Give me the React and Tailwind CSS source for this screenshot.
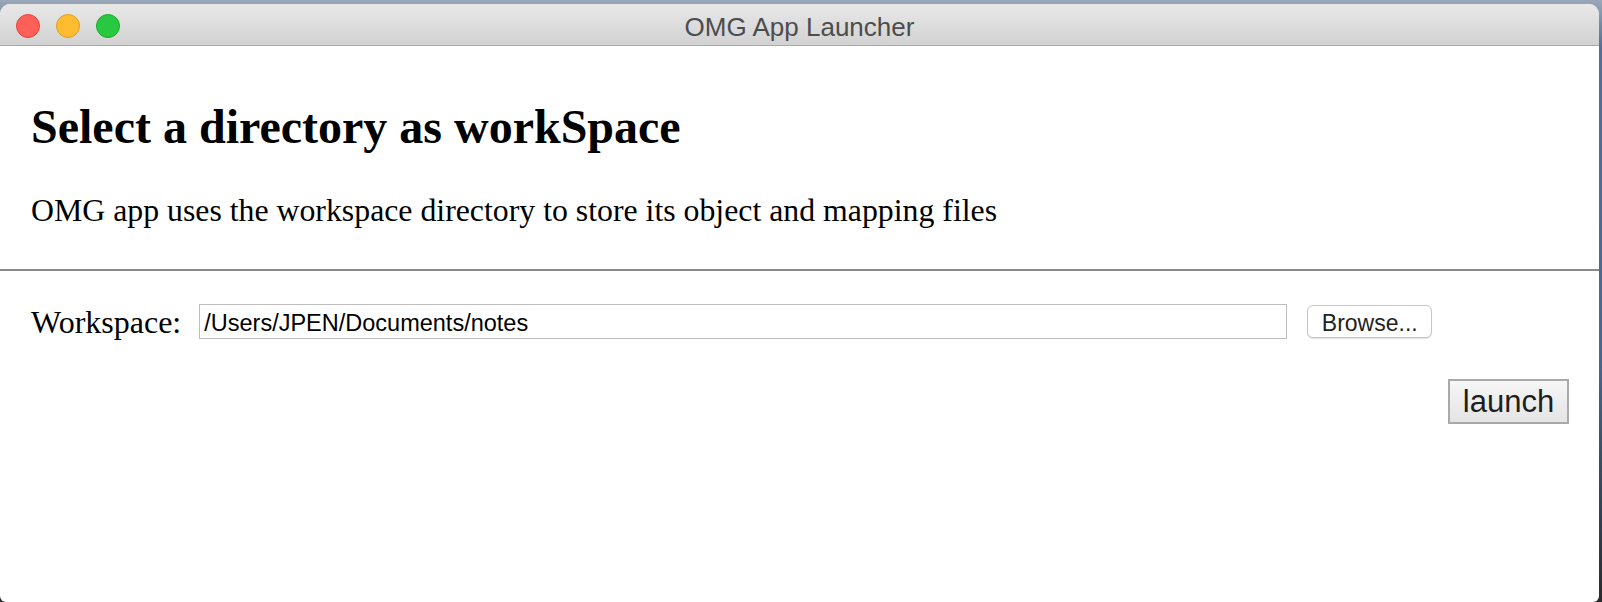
export default function App() {
  return (
    <div className="w-[1602px] h-[602px] overflow-hidden pt-[4px] pr-[3px] bg-[linear-gradient(to_bottom,#9aa7b8_0%,#4f7099_8%,#456891_60%,#2b2a2c_100%)]">
      <div className="flex flex-col h-full bg-white rounded-t-[10px] rounded-b-[6px] overflow-hidden">
        {/* Title bar */}
        <div className="h-[42px] shrink-0 grid grid-cols-[1fr_auto_1fr] items-center border-b border-[#a9a9a9] bg-[linear-gradient(to_bottom,#e8e8e8,#d2d2d2)]">
          <div className="flex items-center gap-[16px] pl-[16px] pt-[2px]">
            <span className="block w-[24px] h-[24px] rounded-full bg-[#fe5f57] border border-[#e1463f]" />
            <span className="block w-[24px] h-[24px] rounded-full bg-[#febc2e] border border-[#df9e22]" />
            <span className="block w-[24px] h-[24px] rounded-full bg-[#28c840] border border-[#1aab29]" />
          </div>
          <div className="pt-[4px] text-[26px] leading-[30px] text-[#4d4d4d] font-['Liberation_Sans',Arial,sans-serif]">
            OMG App Launcher
          </div>
          <div />
        </div>

        {/* Header */}
        <div className="px-[31px] font-['Liberation_Serif','Times_New_Roman',serif] text-black">
          <h2 className="mt-[53px] text-[48px] leading-[56px] font-bold">
            Select a directory as workSpace
          </h2>
          <p className="mt-[38px] text-[31.8px] leading-[36px]">
            OMG app uses the workspace directory to store its object and mapping files
          </p>
        </div>

        <div className="mt-[40px] h-[2px] bg-[#8a8a8a] shrink-0" />

        {/* Form */}
        <div className="px-[30px]">
          <div className="mt-[31px] flex items-center">
            <label className="pl-[1px] pt-[2px] text-[32px] leading-[36px] font-['Liberation_Serif','Times_New_Roman',serif] text-black">
              Workspace:
            </label>
            <div className="ml-[18px] w-[1088px] h-[35px] border border-[#bdbdbd] bg-white flex items-center pl-[4px] pt-[4px]">
              <span className="text-[23.5px] leading-[28px] text-black font-['Liberation_Sans',Arial,sans-serif]">
                /Users/JPEN/Documents/notes
              </span>
            </div>
            <button className="ml-[20px] w-[125px] h-[33px] rounded-[6px] border border-[#c6c6c6] bg-white shadow-[0_1px_1px_rgba(0,0,0,0.12)] flex items-center justify-center pt-[4px] text-[23px] leading-[26px] text-[#222] font-['Liberation_Sans',Arial,sans-serif]">
              Browse...
            </button>
          </div>
          <div className="mt-[39px] flex justify-end">
            <button className="w-[121px] h-[45px] border-2 border-[#a9a9a9] bg-[linear-gradient(to_bottom,#f6f6f6,#e4e4e4)] flex items-center justify-center text-[31px] leading-[36px] text-[#1e1e1e] font-['Liberation_Sans',Arial,sans-serif]">
              launch
            </button>
          </div>
        </div>
      </div>
    </div>
  );
}
